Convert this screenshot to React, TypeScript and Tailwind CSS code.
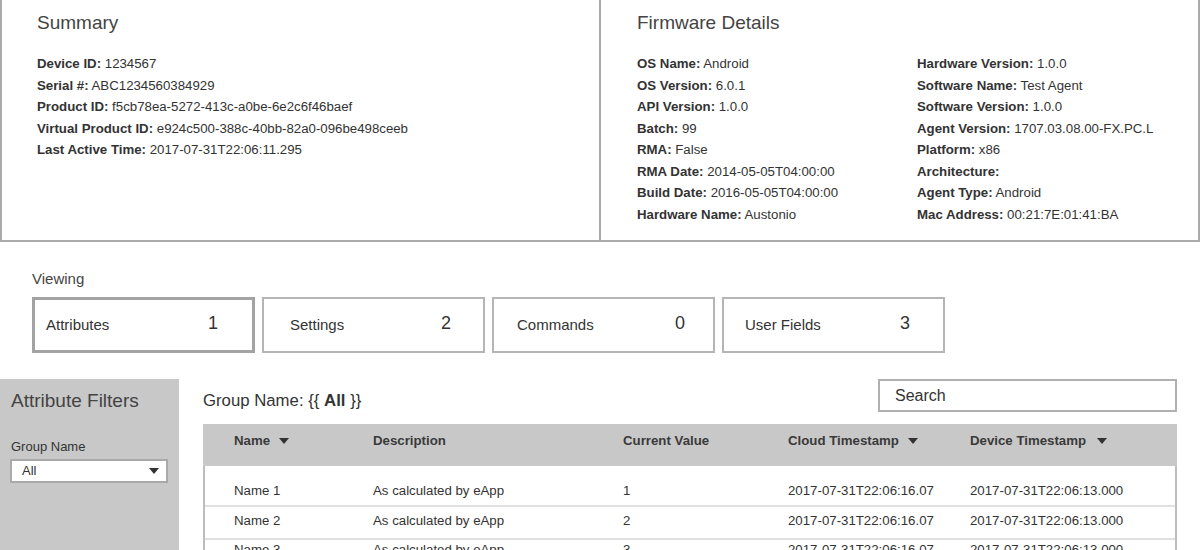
import React from 'react';

const summaryRows: [string, string][] = [
  ['Device ID:', '1234567'],
  ['Serial #:', 'ABC1234560384929'],
  ['Product ID:', 'f5cb78ea-5272-413c-a0be-6e2c6f46baef'],
  ['Virtual Product ID:', 'e924c500-388c-40bb-82a0-096be498ceeb'],
  ['Last Active Time:', '2017-07-31T22:06:11.295'],
];

const firmwareLeft: [string, string][] = [
  ['OS Name:', 'Android'],
  ['OS Version:', '6.0.1'],
  ['API Version:', '1.0.0'],
  ['Batch:', '99'],
  ['RMA:', 'False'],
  ['RMA Date:', '2014-05-05T04:00:00'],
  ['Build Date:', '2016-05-05T04:00:00'],
  ['Hardware Name:', 'Austonio'],
];

const firmwareRight: [string, string][] = [
  ['Hardware Version:', '1.0.0'],
  ['Software Name:', 'Test Agent'],
  ['Software Version:', '1.0.0'],
  ['Agent Version:', '1707.03.08.00-FX.PC.L'],
  ['Platform:', 'x86'],
  ['Architecture:', ''],
  ['Agent Type:', 'Android'],
  ['Mac Address:', '00:21:7E:01:41:BA'],
];

// label column widths put the counts where the mockup has them
const tabs = [
  { label: 'Attributes', count: '1', labelCls: 'pl-[11px] w-[173px]', active: true },
  { label: 'Settings', count: '2', labelCls: 'pl-[26px] w-[177px]', active: false },
  { label: 'Commands', count: '0', labelCls: 'pl-[23px] w-[181px]', active: false },
  { label: 'User Fields', count: '3', labelCls: 'pl-[21px] w-[176px]', active: false },
];

const rows = [
  { name: 'Name 1', value: '1', cls: 'h-[41px] pt-[17px]' },
  { name: 'Name 2', value: '2', cls: 'h-[33px] pt-[6px]' },
  { name: 'Name 3', value: '3', cls: 'h-[33px] pt-[2px]' },
];

const Caret = ({ className = '' }: { className?: string }) => (
  <svg width="10" height="6" viewBox="0 0 10 6" className={className}>
    <polygon points="0,0 10,0 5,6" fill="#333" />
  </svg>
);

const Field = ({ label, value }: { label: string; value: string }) => (
  <div className="leading-[21.5px] whitespace-nowrap">
    <span className="font-bold">{label}</span> {value}
  </div>
);

export default function App() {
  return (
    <div className="w-[1200px] h-[550px] overflow-hidden bg-white text-[#333] font-['Liberation_Sans',Arial,sans-serif]">
      <div className="flex h-[242px] border-x-2 border-b-2 border-[#ababab]">
        <div className="w-[599px] border-r-2 border-[#ababab] pl-[35px] pt-[11px]">
          <h2 className="text-[19px] leading-[24px] font-light text-[#444]">Summary</h2>
          <div className="mt-[18px] text-[13.25px]">
            {summaryRows.map(([l, v]) => (
              <Field key={l} label={l} value={v} />
            ))}
          </div>
        </div>
        <div className="flex-1 pl-[36px] pt-[11px]">
          <h2 className="text-[19px] leading-[24px] font-light text-[#444]">Firmware Details</h2>
          <div className="mt-[18px] text-[13.25px] grid grid-cols-[280px_1fr]">
            <div>
              {firmwareLeft.map(([l, v]) => (
                <Field key={l} label={l} value={v} />
              ))}
            </div>
            <div>
              {firmwareRight.map(([l, v]) => (
                <Field key={l} label={l} value={v} />
              ))}
            </div>
          </div>
        </div>
      </div>

      <div className="pl-[32px] mt-[27px]">
        <div className="text-[15px] leading-[20px] text-[#444]">Viewing</div>
        <div className="flex gap-[7px] mt-[8px]">
          {tabs.map((t) => (
            <div
              key={t.label}
              className={`w-[223px] h-[56px] flex items-center bg-white ${
                t.active ? 'border-[3px] border-[#a3a3a3]' : 'border-2 border-[#b5b5b5]'
              }`}
            >
              <span className={`text-[15px] shrink-0 text-[#333] ${t.labelCls}`}>{t.label}</span>
              <span className="text-[18px] font-light -mt-[4px]">{t.count}</span>
            </div>
          ))}
        </div>
      </div>

      <div className="flex mt-[26px] h-[171px]">
        <div className="w-[179px] bg-[#c8c8c8] pl-[11px] pt-[11px]">
          <div className="text-[19px] leading-[22px] font-light text-[#444]">Attribute Filters</div>
          <div className="text-[13px] leading-[16px] mt-[27px]">Group Name</div>
          <div className="mt-[4px] -ml-[1px] w-[158px] h-[24px] bg-white border-2 border-[#a9a9a9] flex items-center justify-between pl-[10px] pr-[7px] text-[13px]">
            <span>All</span>
            <Caret />
          </div>
        </div>

        <div className="flex-1 pl-[24px] pr-[23px]">
          <div className="flex justify-between items-start">
            <div className="text-[16.75px] leading-[20px] mt-[12px] text-[#333]">
              Group Name: {'{{'} <span className="font-bold">All</span> {'}}'}
            </div>
            <div className="w-[299px] h-[33px] border-2 border-[#b0b0b0] pl-[15px] flex items-center text-[16px]">
              Search
            </div>
          </div>

          <div className="mt-[12px] text-[13.25px]">
            <div className="grid grid-cols-[170px_250px_165px_182px_1fr] items-start h-[42px] bg-[#c8c8c8] pt-[9px] font-bold text-[#3a3a3a] leading-[16px]">
              <div className="pl-[31px] flex items-center h-[16px]">
                Name <Caret className="ml-[9px]" />
              </div>
              <div>Description</div>
              <div>Current Value</div>
              <div className="flex items-center h-[16px]">
                Cloud Timestamp <Caret className="ml-[9px]" />
              </div>
              <div className="flex items-center h-[16px]">
                Device Timestamp <Caret className="ml-[11px]" />
              </div>
            </div>
            <div className="border-x-2 border-[#bdbdbd]">
              {rows.map((r) => (
                <div
                  key={r.name}
                  className={`grid grid-cols-[168px_250px_165px_182px_1fr] border-b-2 border-[#e0e0e0] leading-[16px] ${r.cls}`}
                >
                  <div className="pl-[29px]">{r.name}</div>
                  <div>As calculated by eApp</div>
                  <div>{r.value}</div>
                  <div>2017-07-31T22:06:16.07</div>
                  <div>2017-07-31T22:06:13.000</div>
                </div>
              ))}
            </div>
          </div>
        </div>
      </div>
    </div>
  );
}
